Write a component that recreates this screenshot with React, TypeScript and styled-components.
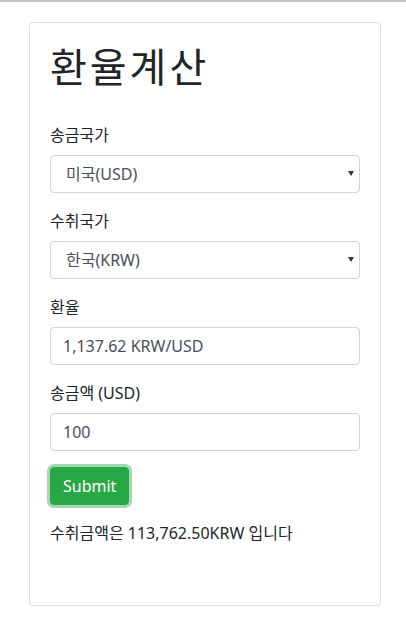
import React, { FC } from "react";
import styled, { createGlobalStyle } from "styled-components";

const GlobalStyle = createGlobalStyle`
    html, body {
        margin: 0;
        padding: 0;
        background: #fff;
    }
    body {
        border-top: 2px solid #c4c4c4;
        font-family: "Noto Sans", "Noto Sans CJK KR", sans-serif;
        color: #212529;
        font-size: 16px;
        line-height: 1.5;
    }
    * {
        box-sizing: border-box;
    }
`;

const Page = styled.div`
    padding: 20px 25px 30px 29px;
`;

const Card = styled.div`
    border: 1px solid rgba(0, 0, 0, 0.125);
    border-radius: 4px;
    padding: 20px 20px 60px;
    background: #fff;
`;

const Title = styled.h1`
    margin: 0 0 32px;
    font-size: 40px;
    font-weight: 400;
    line-height: 1.2;
    letter-spacing: 3px;
`;

const Group = styled.div`
    margin-bottom: 16px;
`;

const Label = styled.label`
    display: block;
    margin-bottom: 8px;
    font-size: 16px;
`;

const SelectWrap = styled.div`
    position: relative;
`;

const Select = styled.select`
    display: block;
    width: 100%;
    height: 38px;
    padding: 6px 12px 6px 15px;
    font: inherit;
    font-size: 16px;
    color: #495057;
    background: #fff;
    border: 1px solid #ced4da;
    border-radius: 4px;
    appearance: none;
    -webkit-appearance: none;
    outline: none;
`;

const Arrow = styled.span`
    position: absolute;
    right: 6px;
    top: 16px;
    width: 0;
    height: 0;
    border-left: 3px solid transparent;
    border-right: 3px solid transparent;
    border-top: 5px solid #333;
    pointer-events: none;
`;

const Input = styled.input`
    display: block;
    width: 100%;
    height: 38px;
    padding: 6px 12px;
    font: inherit;
    font-size: 16px;
    color: #495057;
    background: #fff;
    border: 1px solid #ced4da;
    border-radius: 4px;
    outline: none;
`;

const Button = styled.button`
    display: inline-block;
    height: 38px;
    padding: 6px 12px;
    font: inherit;
    font-size: 16px;
    color: #fff;
    background: #28a745;
    border: 1px solid #28a745;
    border-radius: 4px;
    box-shadow: 0 0 0 3px rgba(72, 180, 97, 0.5);
`;

const Result = styled.p`
    margin: 16px 0 0;
    font-size: 16px;
`;

const App: FC = () => {
    return (
        <Page>
            <GlobalStyle />
            <Card>
                <Title>환율계산</Title>
                <Group>
                    <Label>송금국가</Label>
                    <SelectWrap>
                        <Select defaultValue="USD">
                            <option value="USD">미국(USD)</option>
                        </Select>
                        <Arrow />
                    </SelectWrap>
                </Group>
                <Group>
                    <Label>수취국가</Label>
                    <SelectWrap>
                        <Select defaultValue="KRW">
                            <option value="KRW">한국(KRW)</option>
                        </Select>
                        <Arrow />
                    </SelectWrap>
                </Group>
                <Group>
                    <Label>환율</Label>
                    <Input readOnly value="1,137.62 KRW/USD" />
                </Group>
                <Group>
                    <Label>송금액 (USD)</Label>
                    <Input readOnly value="100" />
                </Group>
                <Button>Submit</Button>
                <Result>수취금액은 113,762.50KRW 입니다</Result>
            </Card>
        </Page>
    );
};

export default App;
